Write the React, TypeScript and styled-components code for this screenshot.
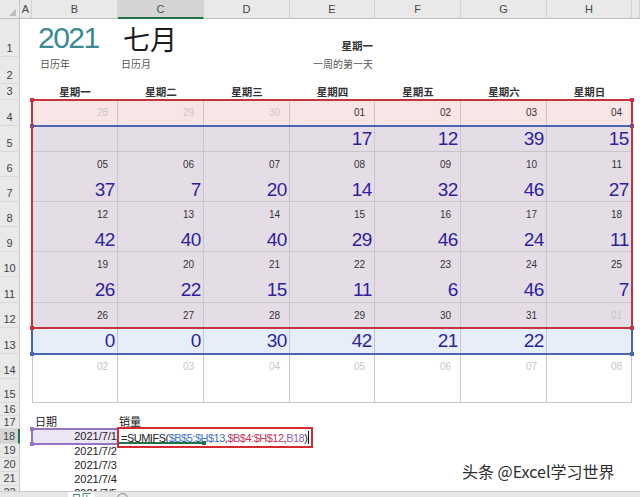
import React from 'react';
import styled, { createGlobalStyle } from 'styled-components';

const GlobalStyle = createGlobalStyle`
  html, body {
    margin: 0;
    padding: 0;
    background: #ffffff;
  }
  body {
    font-family: "Liberation Sans", "Noto Sans CJK SC", sans-serif;
    color: #222;
  }
`;

// column widths A..I and row heights 1..22
const COL_W = [12, 86, 86, 86, 85, 86, 86, 85, 8];
const LETTERS = ['A', 'B', 'C', 'D', 'E', 'F', 'G', 'H', 'I'];
const CAL_W = COL_W.slice(1, 8);
const ROW_H = [0, 38, 27, 16, 26, 26, 25, 25, 25, 25, 25, 26, 25, 26, 25, 24, 13, 13, 15, 14, 14, 14, 14];

const PINK = '#f8e6e7';
const LAV = '#e5dde6';
const ICE = '#e6eef9';
const WHITE = '#ffffff';

type CalRow = {
  kind: 'date' | 'value' | 'blank';
  bg: string;
  cells: string[];
  muted?: number[];
  line?: boolean;
};

const CAL: Record<number, CalRow> = {
  4: { kind: 'date', bg: PINK, cells: ['28', '29', '30', '01', '02', '03', '04'], muted: [0, 1, 2], line: true },
  5: { kind: 'value', bg: LAV, cells: ['', '', '', '17', '12', '39', '15'], line: true },
  6: { kind: 'date', bg: LAV, cells: ['05', '06', '07', '08', '09', '10', '11'] },
  7: { kind: 'value', bg: LAV, cells: ['37', '7', '20', '14', '32', '46', '27'], line: true },
  8: { kind: 'date', bg: LAV, cells: ['12', '13', '14', '15', '16', '17', '18'] },
  9: { kind: 'value', bg: LAV, cells: ['42', '40', '40', '29', '46', '24', '11'], line: true },
  10: { kind: 'date', bg: LAV, cells: ['19', '20', '21', '22', '23', '24', '25'] },
  11: { kind: 'value', bg: LAV, cells: ['26', '22', '15', '11', '6', '46', '7'], line: true },
  12: { kind: 'date', bg: LAV, cells: ['26', '27', '28', '29', '30', '31', '01'], muted: [6], line: true },
  13: { kind: 'value', bg: ICE, cells: ['0', '0', '30', '42', '21', '22', ''], line: true },
  14: { kind: 'date', bg: WHITE, cells: ['02', '03', '04', '05', '06', '07', '08'], muted: [0, 1, 2, 3, 4, 5, 6] },
  15: { kind: 'blank', bg: WHITE, cells: ['', '', '', '', '', '', ''], line: true },
};

const WEEKDAYS = ['星期一', '星期二', '星期三', '星期四', '星期五', '星期六', '星期日'];

const Page = styled.div`
  position: relative;
  width: 640px;
  height: 497px;
  overflow: hidden;
  display: flex;
  flex-direction: column;
  background: #fff;
`;

const Sheet = styled.div`
  flex: 0 0 491px;
  overflow: hidden;
  display: flex;
  flex-direction: column;
`;

const Row = styled.div<{ $h: number }>`
  display: flex;
  flex: 0 0 ${p => p.$h}px;
  height: ${p => p.$h}px;
`;

const Corner = styled.div`
  position: relative;
  width: 20px;
  flex: none;
  box-sizing: border-box;
  background: #e9e9e9;
  border-right: 1px solid #c6c6c6;
  border-bottom: 1px solid #bdbdbd;
  &::after {
    content: '';
    position: absolute;
    right: 3px;
    bottom: 2px;
    border-style: solid;
    border-width: 0 0 7px 7px;
    border-color: transparent transparent #bdbdbd transparent;
  }
`;

const ColHead = styled.div<{ $w: number; $active?: boolean }>`
  width: ${p => p.$w}px;
  flex: none;
  box-sizing: border-box;
  display: flex;
  align-items: center;
  justify-content: center;
  background: ${p => (p.$active ? '#d4d4d4' : '#e9e9e9')};
  border-right: 1px solid #d3d3d3;
  border-bottom: ${p => (p.$active ? '2px solid #217346' : '1px solid #bdbdbd')};
  font-size: 11px;
  color: ${p => (p.$active ? '#2f5f44' : '#444')};
  overflow: hidden;
`;

const RowHead = styled.div<{ $active?: boolean; $tall?: boolean }>`
  width: 20px;
  flex: none;
  box-sizing: border-box;
  display: flex;
  justify-content: center;
  align-items: ${p => (p.$tall ? 'flex-end' : 'center')};
  padding-bottom: ${p => (p.$tall ? '1px' : '0')};
  background: ${p => (p.$active ? '#d4d4d4' : '#e9e9e9')};
  border-right: ${p => (p.$active ? '2px solid #217346' : '1px solid #c6c6c6')};
  border-bottom: 1px solid #d9d9d9;
  font-size: 11px;
  line-height: 13px;
  color: #444;
  overflow: hidden;
`;

const Cell = styled.div<{ $w: number; $justify?: string; $align?: string; $pad?: string; $bg?: string }>`
  width: ${p => p.$w}px;
  flex: none;
  box-sizing: border-box;
  display: flex;
  justify-content: ${p => p.$justify ?? 'flex-start'};
  align-items: ${p => p.$align ?? 'center'};
  padding: ${p => p.$pad ?? '0'};
  background: ${p => p.$bg ?? 'transparent'};
  white-space: nowrap;
`;

const CalCell = styled.div<{ $w: number; $bg: string; $kind: string; $line?: boolean; $first?: boolean }>`
  width: ${p => p.$w}px;
  flex: none;
  box-sizing: border-box;
  display: flex;
  align-items: center;
  justify-content: flex-end;
  padding-right: ${p => (p.$kind === 'value' ? '2px' : '9px')};
  background: ${p => p.$bg};
  border-right: 1px solid #c9c6ca;
  border-left: ${p => (p.$first ? '1px solid #c9c6ca' : 'none')};
  border-bottom: ${p => (p.$line ? '1px solid #c9c6ca' : 'none')};
`;

const Year = styled.span`
  font-size: 30px;
  letter-spacing: -1.5px;
  color: #3b8995;
`;

const Month = styled.span`
  font-family: "Noto Sans CJK SC", sans-serif;
  font-size: 27px;
  color: #1c1c1c;
`;

const Caption = styled.span`
  font-family: "Noto Sans CJK SC", sans-serif;
  font-size: 10px;
  line-height: 12px;
  color: #555;
`;

const HeadText = styled.span`
  font-family: "Noto Sans CJK SC", sans-serif;
  font-size: 10.5px;
  line-height: 12px;
  font-weight: bold;
  color: #333;
`;

const DateNum = styled.span<{ $muted?: boolean }>`
  font-size: 10px;
  color: ${p => (p.$muted ? '#c6c6c6' : '#333')};
`;

const BigNum = styled.span`
  font-size: 19px;
  line-height: 1;
  letter-spacing: -0.4px;
  color: #2d1f9f;
`;

const Plain = styled.span`
  font-size: 11px;
  line-height: 13px;
  color: #222;
`;

const Range = styled.div<{ $c: string; $x: number; $y: number; $w: number; $h: number }>`
  position: absolute;
  left: ${p => p.$x}px;
  top: ${p => p.$y}px;
  width: ${p => p.$w}px;
  height: ${p => p.$h}px;
  box-sizing: border-box;
  border: 2px solid ${p => p.$c};
  pointer-events: none;
`;

const Handle = styled.div<{ $c: string; $right?: boolean; $bottom?: boolean }>`
  position: absolute;
  width: 4px;
  height: 4px;
  background: ${p => p.$c};
  ${p => (p.$right ? 'right: -3px;' : 'left: -3px;')}
  ${p => (p.$bottom ? 'bottom: -3px;' : 'top: -3px;')}
`;

const FormulaBox = styled.div`
  position: absolute;
  left: 117px;
  top: 427px;
  width: 196px;
  height: 21px;
  box-sizing: border-box;
  border: 2px solid #d52a2f;
  background: #fff;
  display: flex;
  align-items: center;
  padding-left: 2px;
  font-size: 11px;
  letter-spacing: -0.5px;
  white-space: nowrap;
`;

const Ref = styled.span<{ $c: string }>`
  color: ${p => p.$c};
`;

const Caret = styled.span`
  display: inline-block;
  width: 1px;
  height: 13px;
  margin-left: 1px;
  background: #111;
`;

const ActiveEdge = styled.div`
  position: absolute;
  left: 119px;
  top: 442px;
  width: 85px;
  height: 2px;
  background: #217346;
  &::after {
    content: '';
    position: absolute;
    right: -2px;
    top: -1px;
    width: 4px;
    height: 4px;
    background: #217346;
  }
`;

const Watermark = styled.div`
  position: absolute;
  left: 462px;
  top: 459px;
  font-family: "Noto Sans CJK SC", sans-serif;
  font-size: 16px;
  color: #2e2e2e;
  text-shadow: 0 0 2px #fff, 0 0 2px #fff;
  white-space: nowrap;
`;

const TabBar = styled.div`
  flex: 0 0 6px;
  display: flex;
  align-items: flex-start;
  background: #e6e6e6;
  border-top: 1px solid #cdcdcd;
  overflow: hidden;
`;

const Tab = styled.div`
  margin-left: 68px;
  width: 27px;
  height: 100%;
  background: #fff;
  color: #217346;
  font-family: "Noto Sans CJK SC", sans-serif;
  font-size: 10px;
  line-height: 12px;
  text-align: center;
`;

const AddBtn = styled.div`
  margin-left: 22px;
  margin-top: 1px;
  width: 9px;
  height: 9px;
  border: 1px solid #8a8a8a;
  border-radius: 50%;
`;

const blankCells = (from: number, to: number) =>
  COL_W.slice(from, to).map((w, i) => <Cell key={`b${from + i}`} $w={w} />);

function rowContent(r: number) {
  const cal = CAL[r];
  if (cal) {
    return (
      <>
        <Cell $w={COL_W[0]} />
        {cal.cells.map((t, i) => (
          <CalCell key={i} $w={CAL_W[i]} $bg={cal.bg} $kind={cal.kind} $line={cal.line} $first={i === 0}>
            {cal.kind === 'date' && <DateNum $muted={cal.muted?.includes(i)}>{t}</DateNum>}
            {cal.kind === 'value' && <BigNum>{t}</BigNum>}
          </CalCell>
        ))}
        <Cell $w={COL_W[8]} />
      </>
    );
  }
  switch (r) {
    case 1:
      return (
        <>
          <Cell $w={COL_W[0]} />
          <Cell $w={COL_W[1]} $pad="0 0 0 6px"><Year>2021</Year></Cell>
          <Cell $w={COL_W[2]} $pad="0 0 0 5px"><Month>七月</Month></Cell>
          <Cell $w={COL_W[3]} />
          <Cell $w={COL_W[4]} $justify="flex-end" $align="flex-end" $pad="0 2px 5px 0">
            <HeadText>星期一</HeadText>
          </Cell>
          {blankCells(5, 9)}
        </>
      );
    case 2:
      return (
        <>
          <Cell $w={COL_W[0]} />
          <Cell $w={COL_W[1]} $align="flex-start" $pad="1px 0 0 8px"><Caption>日历年</Caption></Cell>
          <Cell $w={COL_W[2]} $align="flex-start" $pad="1px 0 0 3px"><Caption>日历月</Caption></Cell>
          <Cell $w={COL_W[3]} />
          <Cell $w={COL_W[4]} $justify="flex-end" $align="flex-start" $pad="1px 2px 0 0">
            <Caption>一周的第一天</Caption>
          </Cell>
          {blankCells(5, 9)}
        </>
      );
    case 3:
      return (
        <>
          <Cell $w={COL_W[0]} />
          {WEEKDAYS.map((d, i) => (
            <Cell key={d} $w={CAL_W[i]} $justify="center"><HeadText>{d}</HeadText></Cell>
          ))}
          <Cell $w={COL_W[8]} />
        </>
      );
    case 17:
      return (
        <>
          <Cell $w={COL_W[0]} />
          <Cell $w={COL_W[1]} $pad="0 0 0 3px"><Plain>日期</Plain></Cell>
          <Cell $w={COL_W[2]} $pad="0 0 0 1px"><Plain>销量</Plain></Cell>
          {blankCells(3, 9)}
        </>
      );
    default:
      if (r >= 18) {
        return (
          <>
            <Cell $w={COL_W[0]} />
            <Cell $w={COL_W[1]} $justify="flex-end" $pad="0 1px 0 0" $bg={r === 18 ? '#ece5f3' : undefined}>
              <Plain>{`2021/7/${r - 17}`}</Plain>
            </Cell>
            {blankCells(2, 9)}
          </>
        );
      }
      return blankCells(0, 9);
  }
}

const ROWS = Array.from({ length: 22 }, (_, i) => i + 1);

const App: React.FC = () => (
  <Page>
    <GlobalStyle />
    <Sheet>
      <Row $h={19}>
        <Corner />
        {LETTERS.map((l, i) => (
          <ColHead key={l} $w={COL_W[i]} $active={l === 'C'}>{l === 'I' ? '' : l}</ColHead>
        ))}
      </Row>
      {ROWS.map(r => (
        <Row key={r} $h={ROW_H[r]}>
          <RowHead $active={r === 18} $tall={ROW_H[r] >= 20}>{r}</RowHead>
          {rowContent(r)}
        </Row>
      ))}
    </Sheet>
    <TabBar>
      <Tab>日历</Tab>
      <AddBtn />
    </TabBar>

    <Range $c="#4a63b3" $x={31} $y={125} $w={602} $h={230}>
      <Handle $c="#4a63b3" />
      <Handle $c="#4a63b3" $right />
      <Handle $c="#4a63b3" $bottom />
      <Handle $c="#4a63b3" $right $bottom />
    </Range>
    <Range $c="#c7323f" $x={31} $y={99} $w={602} $h={230}>
      <Handle $c="#c7323f" />
      <Handle $c="#c7323f" $right />
      <Handle $c="#c7323f" $bottom />
      <Handle $c="#c7323f" $right $bottom />
    </Range>
    <Range $c="#9574c6" $x={31} $y={428} $w={88} $h={17}>
      <Handle $c="#9574c6" />
      <Handle $c="#9574c6" $bottom />
    </Range>

    <FormulaBox>
      <Ref $c="#222">=SUMIFS(</Ref>
      <Ref $c="#3d6fc6">$B$5:$H$13</Ref>
      <Ref $c="#222">,</Ref>
      <Ref $c="#c8365a">$B$4:$H$12</Ref>
      <Ref $c="#222">,</Ref>
      <Ref $c="#8b5fc0">B18</Ref>
      <Ref $c="#222">)</Ref>
      <Caret />
    </FormulaBox>
    <ActiveEdge />

    <Watermark>头条 @Excel学习世界</Watermark>
  </Page>
);

export default App;
